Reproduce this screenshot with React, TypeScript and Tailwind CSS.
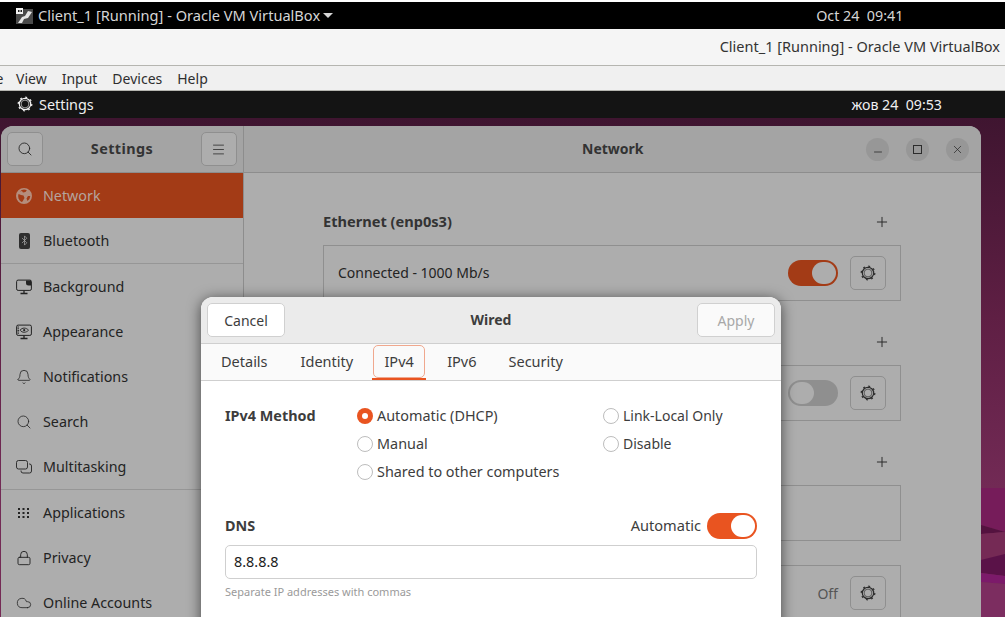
import { Search, Menu, Plus, Minus, X, Bell, Lock, Cloud, Bluetooth } from 'lucide-react';
import type { ReactNode } from 'react';

function GearIcon({ className = '' }: { className?: string }) {
  return (
    <svg viewBox="0 0 16 16" className={className} fill="none" stroke="currentColor">
      <circle cx="8" cy="8" r="3.900" strokeWidth="0.800" opacity="0.800" />
      <circle cx="8" cy="8" r="5.700" strokeWidth="1.200" />
      <circle cx="8" cy="8" r="6.800" strokeWidth="1.200" strokeDasharray="2 3.340" />
    </svg>
  );
}

function GlobeIcon() {
  return (
    <svg viewBox="0 0 16 16" className="h-4 w-4 text-[#b58d7c]" fill="currentColor">
      <path d="M8 0a8 8 0 1 0 0 16A8 8 0 0 0 8 0Zm0 1.600c1 0 1.900.2 2.800.7L9.500 4 7 4.500 6 3 4 3.500A6.400 6.400 0 0 1 8 1.600ZM2.500 6 5 7l2.500.5L8.500 10l-2 3.500-1 .4A6.400 6.400 0 0 1 2.500 6Zm9 7-1-2.500L12 8h2.300a6.400 6.400 0 0 1-2.800 5Z" fillRule="evenodd" />
    </svg>
  );
}

function MonitorIcon({ eye }: { eye?: boolean }) {
  return (
    <svg viewBox="0 0 16 16" className="h-4 w-4" fill="none" stroke="currentColor" strokeWidth="1">
      <rect x="0.600" y="1.100" width="14.800" height="10.300" rx="1.500" />
      <path d="M8 11.500v2.500M4.500 14.500h7" strokeWidth="1.300" />
      {eye ? (
        <>
          <path d="M4 6.200c2.300-2.800 6-2.800 8.500 0-2.500 2.800-6.200 2.800-8.500 0Z" strokeWidth="0.900" />
          <circle cx="8.200" cy="6.200" r="1.100" fill="currentColor" stroke="none" />
          <path d="M2.200 2.500v7.500" strokeWidth="1.400" strokeDasharray="1 .7" />
        </>
      ) : (
        <path d="M10 1.500h5v5h-2.500A2.500 2.500 0 0 1 10 4Z" fill="currentColor" stroke="none" />
      )}
    </svg>
  );
}

function WindowsIcon() {
  return (
    <svg viewBox="0 0 16 16" className="h-4 w-4" fill="none" stroke="currentColor" strokeWidth="0.900">
      <rect x="0.500" y="1.500" width="11" height="8.500" rx="2" />
      <path d="M13 5h.500a2 2 0 0 1 2 2v5a2 2 0 0 1-2 2H7a2 2 0 0 1-2-2v-.500" />
    </svg>
  );
}

function AppsIcon() {
  return (
    <svg viewBox="0 0 16 16" className="h-4 w-4" fill="currentColor">
      {[3, 7, 11].map((y) =>
        [2, 6.500, 11].map((x) => <rect key={`${x}-${y}`} x={x} y={y} width="2" height="2" />),
      )}
    </svg>
  );
}

function VBoxIcon() {
  return (
    <svg viewBox="0 0 17 16" className="h-[16px] w-[17px]">
      <rect x="0" y="1" width="17" height="15" fill="#4a4a4a" />
      <rect x="0" y="0" width="7" height="6" fill="#f2f2f2" />
      <rect x="2" y="2" width="1.500" height="2" fill="#222" />
      <rect x="4.500" y="2" width="1.500" height="2" fill="#222" />
      <path d="M2 15 L6 9 L9 8 L12 3 L16 4 L12 10 L8 11 L6 15 Z" fill="#e6e6e6" />
    </svg>
  );
}

function Toggle({ on, color, knob }: { on: boolean; color: string; knob: string }) {
  return (
    <span
      className={`flex h-[26px] w-[50px] items-center rounded-full p-[2px] ${color} ${on ? 'justify-end' : 'justify-start'}`}
    >
      <span className={`h-[22px] w-[24px] rounded-full ${knob}`} />
    </span>
  );
}

function GearButton() {
  return (
    <span className="flex h-[34px] w-[36px] items-center justify-center rounded-[5px] border border-[#8f8f8f] bg-[#adadad] text-[#2c2c2c]">
      <GearIcon className="h-4 w-4" />
    </span>
  );
}

function SideItem({ icon, label, active }: { icon: ReactNode; label: string; active?: boolean }) {
  return (
    <div
      className={`flex h-[45px] items-center gap-[11px] pl-[15px] text-[14.300px] ${active ? 'bg-[#a33b16] text-[#b5a59e]' : 'text-[#232323]'}`}
    >
      <span className="flex w-4 justify-center">{icon}</span>
      <span>{label}</span>
    </div>
  );
}

function Section({ title, children }: { title?: string; children?: ReactNode }) {
  return (
    <div className="w-[578px]">
      <div className="flex h-[24px] items-center justify-between pr-[11px] text-[14.600px] font-bold text-[#333]">
        <span>{title}</span>
        <Plus className="h-[16px] w-[16px] text-[#2c2c2c]" strokeWidth={1.500} />
      </div>
      {children}
    </div>
  );
}

function Card({ children }: { children?: ReactNode }) {
  return (
    <div className="mt-[11px] flex h-[56px] items-center justify-end border border-[#8f8f8f] pl-[14px] pr-[14px] text-[#232323]">
      {children}
    </div>
  );
}

function Radio({ label, checked, raise }: { label: string; checked?: boolean; raise?: boolean }) {
  return (
    <div className="flex h-[28px] items-center gap-[4px] text-[#3d3d3d]">
      {checked ? (
        <span className="flex h-4 w-4 items-center justify-center rounded-full bg-[#e95420]">
          <span className="h-[6px] w-[6px] rounded-full bg-white" />
        </span>
      ) : (
        <span className="h-4 w-4 rounded-full border border-[#bdbdbd] bg-white" />
      )}
      <span className={raise ? 'mb-[2px]' : ''}>{label}</span>
    </div>
  );
}

function Tab({ label, active }: { label: string; active?: boolean }) {
  if (active) {
    return (
      <div className="relative flex h-[36px] w-[54px] justify-center pt-px">
        <span className="flex h-[33px] w-[52px] items-center justify-center rounded-[5px] border border-[#f0a88e]">
          {label}
        </span>
        <span className="absolute bottom-0 left-0 h-[2px] w-full bg-[#e95420]" />
      </div>
    );
  }
  return <div className="flex h-[36px] items-center">{label}</div>;
}

function WiredDialog() {
  return (
    <div className="absolute left-[201px] top-[297px] h-[360px] w-[580px] overflow-hidden rounded-t-[12px] bg-white text-[#3d3d3d] shadow-[0_2px_14px_rgba(0,0,0,0.6)]">
      <div className="flex h-[47px] items-center justify-between border-b border-[#cfcfcf] bg-[#ebebeb] px-[6px] text-[14px]">
        <span className="flex h-[34px] w-[78px] items-center justify-center rounded-[5px] border border-[#d0d0d0] bg-white">
          Cancel
        </span>
        <span className="mb-[2px] font-bold">Wired</span>
        <span className="flex h-[34px] w-[78px] items-center justify-center rounded-[5px] border border-[#d0d0d0] bg-[#fafafa] text-[#a8a8a8]">
          Apply
        </span>
      </div>
      <div className="flex h-[37px] items-start gap-[32px] border-b border-[#cfcfcf] bg-[#fafafa] pl-[20px] text-[14.500px]">
        <Tab label="Details" />
        <div className="ml-px">
          <Tab label="Identity" />
        </div>
        <div className="-ml-[13px] -mr-[11px]">
          <Tab label="IPv4" active />
        </div>
        <Tab label="IPv6" />
        <Tab label="Security" />
      </div>
      <div className="px-[24px] pt-[21px]">
        <div className="flex">
          <div className="flex h-[28px] w-[132px] items-center font-bold">IPv4 Method</div>
          <div className="w-[246px]">
            <Radio label="Automatic (DHCP)" checked />
            <Radio label="Manual" />
            <Radio label="Shared to other computers" />
          </div>
          <div className="text-[14px]">
            <Radio label="Link-Local Only" raise />
            <Radio label="Disable" raise />
          </div>
        </div>
        <div className="mt-[27px] flex h-[26px] items-center justify-between">
          <span className="font-bold">DNS</span>
          <span className="flex items-center gap-[6px] text-[14.600px]">
            Automatic
            <Toggle on color="bg-[#e95420]" knob="bg-white" />
          </span>
        </div>
        <div className="mt-[6px] flex h-[34px] items-center rounded-[5px] border border-[#cfcfcf] pl-[8px] text-[#1c1c1c]">
          8.8.8.8
        </div>
        <div className="mt-[5px] text-[11px] text-[#9a9a9a]">Separate IP addresses with commas</div>
      </div>
    </div>
  );
}

export default function App() {
  return (
    <div className="relative flex h-[617px] w-[1005px] flex-col overflow-hidden bg-white font-['Noto_Sans',sans-serif] text-[14.400px]">
      <div className="mt-[2px] flex h-[27px] shrink-0 items-center bg-black pl-[16px] text-[14.600px] text-[#d6d6d6]">
        <VBoxIcon />
        <span className="ml-[5px]">Client_1 [Running] - Oracle VM VirtualBox</span>
        <span className="ml-[3px] h-0 w-0 border-x-[5px] border-t-[5px] border-x-transparent border-t-[#d6d6d6]" />
        <span className="ml-[483px] text-[14.300px]">Oct 24&nbsp; 09:41</span>
      </div>
      <div className="flex h-[36px] shrink-0 items-center justify-end bg-[#f5f5f5] pr-[5px] text-[14.500px] text-[#333]">
        Client_1 [Running] - Oracle VM VirtualBox
      </div>
      <div className="flex h-[26px] shrink-0 items-center gap-[15px] border-y border-[#b5b5b0] bg-[#f0f0f0] pl-[16px] text-[14px] text-[#2e2e2e]">
        <span className="-ml-[35px] w-[20px]">File</span>
        <span>View</span>
        <span>Input</span>
        <span>Devices</span>
        <span>Help</span>
      </div>
      <div className="flex h-[27px] shrink-0 items-center justify-between bg-[#141414] pl-[17px] pr-[63px] text-[#f0f0f0]">
        <span className="flex items-center gap-[6px]">
          <GearIcon className="h-4 w-4" />
          Settings
        </span>
        <span className="text-[14.200px]">жов 24&nbsp; 09:53</span>
      </div>
      <div className="relative min-h-0 flex-1 bg-[linear-gradient(180deg,#3f1530_0%,#5f1f44_40%,#722a55_74%,#752a55_100%)] pl-px pt-[8px]">
        <svg viewBox="0 0 24 129" preserveAspectRatio="none" className="absolute bottom-0 right-0 h-[129px] w-[24px]">
          <polygon points="0,0 24,0 24,44 0,37" fill="#761c5a" />
          <polygon points="0,37 24,44 0,46" fill="#54123f" />
          <polygon points="0,46 24,44 24,66 0,72" fill="#752a55" />
          <polygon points="0,72 24,66 24,88 0,85" fill="#5a1248" />
          <polygon points="0,85 24,88 24,96 0,94" fill="#7c1a6a" />
          <polygon points="0,94 24,96 24,129 0,129" fill="#7c2d60" />
        </svg>
        <div className="relative h-[520px] w-[980px] overflow-hidden rounded-t-[12px] bg-[#adadad] text-[#232323]">
          <div className="flex h-[47px] border-b border-[#8d8d8d] bg-[#a4a4a4]">
            <div className="flex w-[243px] items-center justify-between border-r border-[#8d8d8d] px-[6px]">
              <span className="flex h-[34px] w-[36px] items-center justify-center rounded-[5px] border border-[#8f8f8f] bg-[#adadad]">
                <Search className="h-[16px] w-[16px]" strokeWidth={1.300} />
              </span>
              <span className="font-bold tracking-[0.03em] text-[#333]">Settings</span>
              <span className="flex h-[34px] w-[36px] items-center justify-center rounded-[5px] border border-[#8f8f8f] bg-[#adadad]">
                <Menu className="h-[15px] w-[15px]" strokeWidth={1.200} />
              </span>
            </div>
            <div className="flex flex-1 items-center justify-between pl-[338px] pr-[12px]">
              <span className="mb-[2px] text-[14px] font-bold text-[#333]">Network</span>
              <div className="flex gap-[17px]">
                <span className="flex h-[23px] w-[23px] items-center justify-center rounded-full bg-[#979797]">
                  <Minus className="mt-[5px] h-[12px] w-[12px]" strokeWidth={1.500} />
                </span>
                <span className="flex h-[23px] w-[23px] items-center justify-center rounded-full bg-[#979797]">
                  <span className="h-[9px] w-[9px] border border-[#2c2c2c]" />
                </span>
                <span className="flex h-[23px] w-[23px] items-center justify-center rounded-full bg-[#979797]">
                  <X className="h-[13px] w-[13px]" strokeWidth={1.300} />
                </span>
              </div>
            </div>
          </div>
          <div className="flex h-[473px]">
            <div className="w-[243px] border-r border-[#8d8d8d]">
              <SideItem active icon={<GlobeIcon />} label="Network" />
              <div className="border-b border-[#969696]">
                <SideItem
                  icon={
                    <span className="flex h-[16px] w-[11px] items-center justify-center rounded-[2px] bg-[#2e2e2e] text-[#adadad]">
                      <Bluetooth className="h-[11px] w-[11px]" strokeWidth={1.500} />
                    </span>
                  }
                  label="Bluetooth"
                />
              </div>
              <SideItem icon={<MonitorIcon />} label="Background" />
              <SideItem icon={<MonitorIcon eye />} label="Appearance" />
              <SideItem icon={<Bell className="h-4 w-4" strokeWidth={1.200} />} label="Notifications" />
              <SideItem icon={<Search className="h-4 w-4" strokeWidth={1.200} />} label="Search" />
              <div className="border-b border-[#969696]">
                <SideItem icon={<WindowsIcon />} label="Multitasking" />
              </div>
              <SideItem icon={<AppsIcon />} label="Applications" />
              <SideItem icon={<Lock className="h-4 w-4" strokeWidth={1.400} />} label="Privacy" />
              <SideItem icon={<Cloud className="h-4 w-4" strokeWidth={1.200} />} label="Online Accounts" />
            </div>
            <div className="flex flex-1 flex-col gap-[29px] pl-[79px] pt-[37px]">
              <Section title="Ethernet (enp0s3)">
                <Card>
                  <span className="mb-[2px] mr-auto text-[14px]">Connected - 1000 Mb/s</span>
                  <Toggle on color="bg-[#a33b16]" knob="bg-[#adadad]" />
                  <span className="ml-[12px]">
                    <GearButton />
                  </span>
                </Card>
              </Section>
              <Section>
                <Card>
                  <Toggle on={false} color="bg-[#8f8f8f]" knob="bg-[#adadad]" />
                  <span className="ml-[12px]">
                    <GearButton />
                  </span>
                </Card>
              </Section>
              <Section>
                <Card />
              </Section>
              <div className="-mt-[5px] flex h-[56px] w-[578px] items-center justify-end border border-[#8f8f8f] pr-[14px] text-[14px] text-[#555]">
                Off
                <span className="ml-[12px]">
                  <GearButton />
                </span>
              </div>
            </div>
          </div>
        </div>
      </div>
      <WiredDialog />
    </div>
  );
}
